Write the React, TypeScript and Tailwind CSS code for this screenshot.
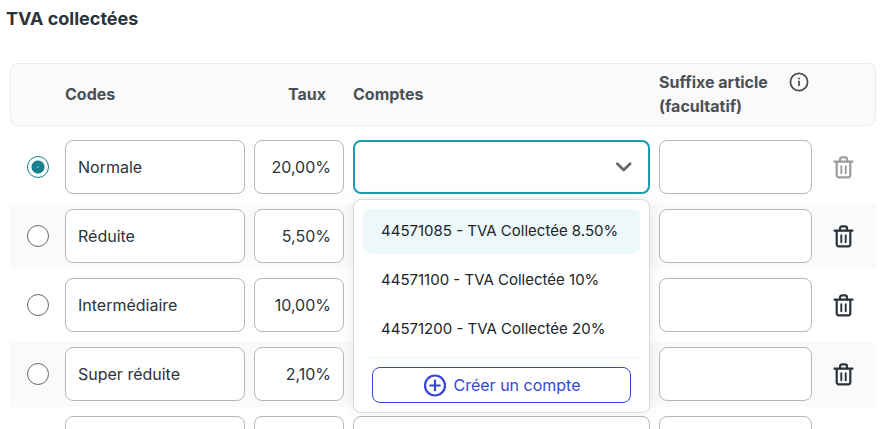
import React, { useState } from 'react';
import clsx from 'clsx';

interface VatRate {
  id: string;
  code: string;
  rate: string;
  deletable: boolean;
}

const rates: VatRate[] = [
  { id: 'normale', code: 'Normale', rate: '20,00%', deletable: false },
  { id: 'reduite', code: 'Réduite', rate: '5,50%', deletable: true },
  { id: 'intermediaire', code: 'Intermédiaire', rate: '10,00%', deletable: true },
  { id: 'super-reduite', code: 'Super réduite', rate: '2,10%', deletable: true },
  { id: 'new', code: '', rate: '', deletable: true },
];

const accounts = [
  '44571085 - TVA Collectée 8.50%',
  '44571100 - TVA Collectée 10%',
  '44571200 - TVA Collectée 20%',
];

const fieldClass =
  'block h-[54px] w-full rounded-lg border border-[#b4b8bc] bg-white px-3 text-[#2b333b] outline-none';

function TrashIcon() {
  return (
    <svg width="21" height="24" viewBox="0 0 21 24" fill="none" stroke="currentColor" strokeWidth="2.2" strokeLinecap="round">
      <path d="M1.5 6.7h18" />
      <path d="M7 6.500V4.400a2 2 0 0 1 2-2h3a2 2 0 0 1 2 2v2.100" />
      <path d="M3.700 7v13.300a2 2 0 0 0 2 2h9.600a2 2 0 0 0 2-2V7" />
      <path d="M8.300 11.200v7M12.700 11.200v7" strokeWidth="1.9" />
    </svg>
  );
}

function InfoIcon() {
  return (
    <svg width="20" height="20" viewBox="0 0 20 20" fill="none" stroke="currentColor" strokeWidth="1.8">
      <circle cx="10" cy="10" r="8.6" />
      <path d="M10 8.700v5.300" />
      <circle cx="10" cy="6.5" r="1" fill="currentColor" stroke="none" />
    </svg>
  );
}

function ChevronIcon() {
  return (
    <svg
      className="pointer-events-none absolute top-1/2 right-[17px] -translate-y-1/2"
      width="18"
      height="12"
      viewBox="0 0 18 12"
      fill="none"
      stroke="#646a70"
      strokeWidth="2.8"
      strokeLinecap="round"
      strokeLinejoin="round"
    >
      <path d="M2.300 2.800 8.700 9l6.400-6.200" />
    </svg>
  );
}

function PlusCircleIcon() {
  return (
    <svg width="24" height="24" viewBox="0 0 24 24" fill="none" stroke="currentColor" strokeWidth="2.2" strokeLinecap="round">
      <circle cx="12" cy="12.5" r="10" />
      <path d="M12 7.700v9.600M7.200 12.500h9.600" />
    </svg>
  );
}

function AccountMenu() {
  return (
    <div className="absolute top-[59px] right-0 left-0 z-10 rounded-lg border border-[#d6d8da] bg-white p-[9px] shadow-[0_0_16px_rgba(0,0,0,0.08)]">
      <ul role="listbox" aria-label="Comptes" className="flex flex-col gap-1">
        {accounts.map((account, i) => (
          <li
            key={account}
            role="option"
            aria-selected={i === 0}
            className={clsx(
              'flex h-[45px] cursor-pointer items-center rounded-lg px-[18px] text-[15px] whitespace-nowrap text-[#212427]',
              i === 0 && 'bg-[#ecf8fa]'
            )}
          >
            {account}
          </li>
        ))}
      </ul>
      <div className="mt-[5px] border-t border-[#f5f5f5] px-[9px] pt-[9px]">
        <button
          type="button"
          className="flex h-9 w-full cursor-pointer items-center justify-center gap-[7px] rounded-lg border border-[#3546d8] text-[#3546d8]"
        >
          <PlusCircleIcon />
          Créer un compte
        </button>
      </div>
    </div>
  );
}

interface RateRowProps {
  rate: VatRate;
  first: boolean;
  checked: boolean;
  open: boolean;
  onCheck: () => void;
}

function RateRow({ rate, first, checked, open, onCheck }: RateRowProps) {
  const cell = clsx('pr-1 pb-[6px] pl-[5px]', first ? 'pt-[10px]' : 'pt-[5px]');

  return (
    <tr className="even:bg-[#fafafa]">
      <td className={cell}>
        <input
          type="radio"
          name="default-rate"
          aria-label={`Taux par défaut ${rate.code}`}
          checked={checked}
          onChange={onCheck}
          className="ml-3 block size-[22px] appearance-none rounded-full border border-[#646a70] bg-white checked:border-[#17808f] checked:bg-[radial-gradient(circle,#fff_0,#17808f_1px,#17808f_6px,#fff_7px)]"
        />
      </td>
      <td className={cell}>
        <input type="text" aria-label="Code" defaultValue={rate.code} className={fieldClass} />
      </td>
      <td className={cell}>
        <input type="text" aria-label="Taux" defaultValue={rate.rate} className={clsx(fieldClass, 'text-right')} />
      </td>
      <td className={cell}>
        <div className="relative">
          <select
            aria-label="Compte"
            defaultValue=""
            className={clsx(
              'block h-[54px] w-full appearance-none rounded-lg bg-white px-3 outline-none',
              open ? 'border-2 border-[#1c9cb0]' : 'border border-[#b4b8bc]'
            )}
          >
            <option value=""></option>
            {accounts.map((account) => (
              <option key={account}>{account}</option>
            ))}
          </select>
          <ChevronIcon />
          {open && <AccountMenu />}
        </div>
      </td>
      <td className={cell}>
        <input type="text" aria-label="Suffixe article" className={fieldClass} />
      </td>
      <td className={cell}>
        <button
          type="button"
          aria-label="Supprimer"
          disabled={!rate.deletable}
          className="ml-3 block cursor-pointer text-[#2b333b] disabled:cursor-default disabled:text-[#999da1]"
        >
          <TrashIcon />
        </button>
      </td>
    </tr>
  );
}

export default function App() {
  const [selected, setSelected] = useState('normale');
  const head = 'border-y border-[#ebebeb] pb-[2px] pl-[5px] font-bold';

  return (
    <main className="max-h-screen overflow-hidden bg-white pt-[7px] pr-5 pl-[6px] font-['Inter',sans-serif] text-base">
      <h2 className="text-lg leading-6 font-bold text-[#2b333b]">TVA collectées</h2>
      <div className="mt-7 pl-1">
        <table className="w-full table-fixed border-separate border-spacing-x-0 border-spacing-y-1">
          <colgroup>
            <col className="w-[50px]" />
            <col className="w-[189px]" />
            <col className="w-[99px]" />
            <col />
            <col className="w-[162px]" />
            <col className="w-[60px]" />
          </colgroup>
          <thead>
            <tr className="h-[63px] bg-[#fafafa] text-left text-[#4b5056]">
              <td className="rounded-l-lg border border-r-0 border-[#ebebeb]"></td>
              <th scope="col" className={head}>Codes</th>
              <th scope="col" className={clsx(head, 'pr-[22px] text-right')}>Taux</th>
              <th scope="col" className={head}>Comptes</th>
              <th scope="col" className={head}>
                <div className="flex items-start justify-between pr-[7px] leading-6">
                  <span>
                    Suffixe article
                    <br />
                    (facultatif)
                  </span>
                  <button type="button" aria-label="Informations" className="mt-[2px]">
                    <InfoIcon />
                  </button>
                </div>
              </th>
              <td className="rounded-r-lg border border-l-0 border-[#ebebeb]"></td>
            </tr>
          </thead>
          <tbody>
            {rates.map((rate, i) => (
              <RateRow
                key={rate.id}
                rate={rate}
                first={i === 0}
                checked={selected === rate.id}
                open={i === 0}
                onCheck={() => setSelected(rate.id)}
              />
            ))}
          </tbody>
        </table>
      </div>
    </main>
  );
}
